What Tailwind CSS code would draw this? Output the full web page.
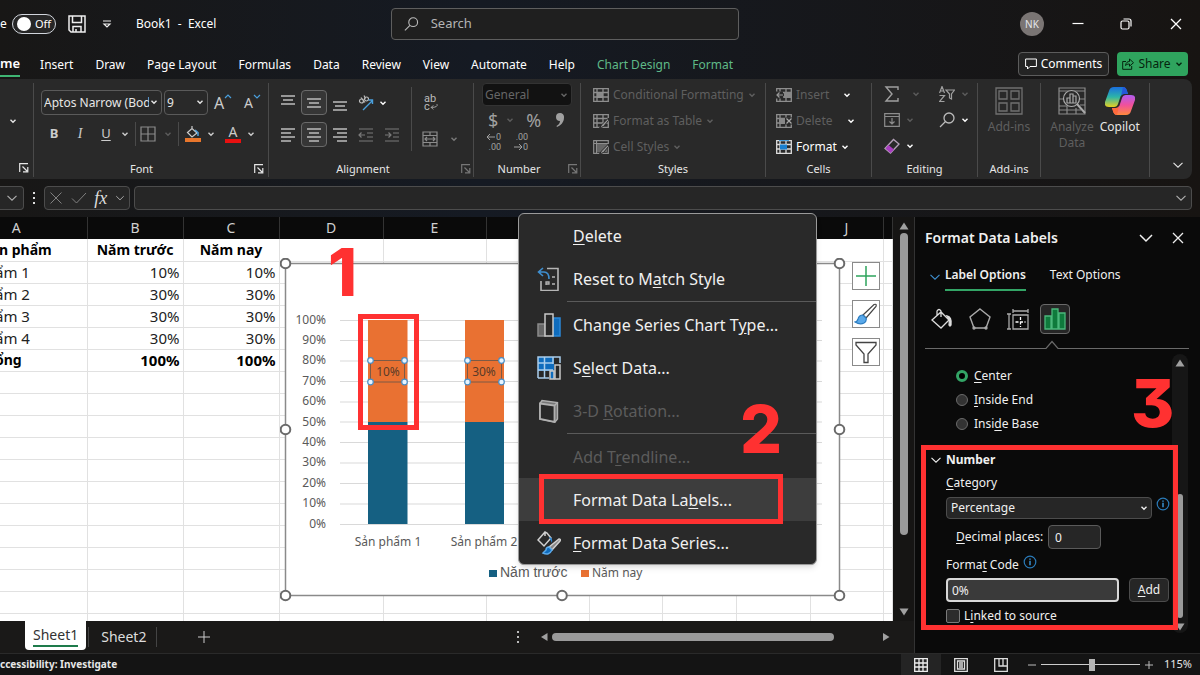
<!DOCTYPE html>
<html lang="en">
  <head>
    <meta charset="UTF-8" />
    <meta name="viewport" content="width=device-width, initial-scale=1.0" />
    <title>Book1 - Excel</title>
    <script src="https://cdn.jsdelivr.net/npm/@tailwindcss/browser@4"></script>
  </head>
  <body class="bg-[#0a0a0a] font-['Noto_Sans','Open_Sans',sans-serif] text-[13px] text-white">
    <!-- Shared icons -->
    <svg class="hidden">
      <symbol id="chev" viewBox="0 0 8 8"><path d="M1.5 2.8 4 5.2 6.5 2.8" fill="none" stroke="currentColor" stroke-width="1.4" /></symbol>
      <symbol id="chev-lg" viewBox="0 0 12 12"><path d="M1.5 3.8 6 8.2 10.5 3.8" fill="none" stroke="currentColor" stroke-width="1.1" /></symbol>
      <symbol id="launch" viewBox="0 0 10 10"><path d="M.7 9V.7H9M3.5 3.5 8 8M8.8 4v4.8H4" fill="none" stroke="currentColor" stroke-width="1.2" /></symbol>
      <symbol id="info" viewBox="0 0 14 14"><circle cx="7" cy="7" r="5.8" fill="none" stroke="#2a7ab8" stroke-width="1.2" /><path d="M7 3.5v1.3M7 5.8v4.5" stroke="#3b9be0" stroke-width="1.4" /></symbol>
      <symbol id="grid" viewBox="0 0 16 14"><path d="M.7.7h14.6v12.6H.7zM.7 4.5h14.6M.7 9h14.6M4 .7v12.6M10 .7v12.6" fill="none" stroke="currentColor" stroke-width="1.3" /></symbol>
    </svg>

    <div class="flex h-screen flex-col overflow-hidden">
      <!-- Title bar and ribbon -->
      <header class="bg-linear-to-r from-[#181716] via-[#151a23] via-40% to-[#171412]">
        <div class="flex h-12 items-center">
          <div class="flex w-[391px] shrink-0 items-center">
            <span class="w-3 text-xs">e</span>
            <button class="flex h-5 w-11 items-center gap-1 rounded-full border border-gray-300 bg-[#262626] pl-1 text-[11px]" aria-label="AutoSave">
              <span class="size-3.5 rounded-full bg-white"></span>Off
            </button>
            <button class="ml-3" aria-label="Save">
              <svg class="size-[18px]" viewBox="0 0 18 18" fill="none" stroke="#eee" stroke-width="1.5"><path d="M1 1h16v16H3l-2-2zM4.500 1v6.500h9V1M5 17v-5.500h8V17M8 14v3" /></svg>
            </button>
            <button class="ml-4" aria-label="Customize Quick Access Toolbar">
              <svg class="size-2.5" viewBox="0 0 10 10" fill="none" stroke="#eee" stroke-width="1.200"><path d="M1 2h8M2 5l3 3 3-3z" /></svg>
            </button>
            <span class="ml-6 text-xs">Book1&nbsp; -&nbsp; Excel</span>
          </div>
          <label class="flex h-8 w-[348px] items-center gap-3 rounded border border-[#5e5e5e] bg-[#1f1f1f] px-3">
            <svg class="size-4" viewBox="0 0 16 16" fill="none" stroke="#bbb" stroke-width="1.200"><circle cx="10" cy="6" r="4.800" /><path d="M6.500 9.500 1 15" /></svg>
            <input type="text" placeholder="Search" aria-label="Search" class="w-full bg-transparent text-[13px] outline-none placeholder:text-[#b4b4b4]" />
          </label>
          <div class="flex flex-1 items-center justify-end pr-4">
            <span class="mr-7 flex size-6 items-center justify-center rounded-full bg-[#7a7574] text-[10px] text-gray-200">NK</span>
            <button class="mr-9" aria-label="Minimize"><svg class="size-3" viewBox="0 0 12 12"><path d="M.5 5.500h11" stroke="#fff" stroke-width="1.200" /></svg></button>
            <button class="mr-9" aria-label="Restore"><svg class="size-3" viewBox="0 0 12 12" fill="none" stroke="#fff" stroke-width="1.200"><rect x="1" y="3" width="8" height="8" rx="1.500" /><path d="M3.500 1H9a2 2 0 0 1 2 2v5.500" /></svg></button>
            <button aria-label="Close"><svg class="size-4" viewBox="0 0 16 16"><path d="m3 3 10 10M13 3 3 13" stroke="#fff" stroke-width="1.300" /></svg></button>
          </div>
        </div>

        <nav class="flex h-[31px] items-center justify-between pr-3 text-xs">
          <div class="flex items-center gap-[22px] pt-0.5">
            <a href="#" class="-mr-0.5 flex h-6 items-center border-b-2 border-[#3fb573] text-[13px] font-semibold">me</a>
            <a href="#">Insert</a>
            <a href="#">Draw</a>
            <a href="#">Page Layout</a>
            <a href="#">Formulas</a>
            <a href="#">Data</a>
            <a href="#">Review</a>
            <a href="#">View</a>
            <a href="#">Automate</a>
            <a href="#">Help</a>
            <a href="#" class="text-[#5fba88]">Chart Design</a>
            <a href="#" class="text-[#5fba88]">Format</a>
          </div>
          <div class="flex gap-2">
            <button class="flex h-6 w-[91px] items-center justify-center gap-1 rounded border border-[#5c5c5c] bg-[#242424]">
              <svg class="size-3 shrink-0" viewBox="0 0 12 12" fill="none" stroke="#fff"><path d="M.6 1h10.800v7.500H5L2.500 11V8.500H.6z" /></svg>Comments
            </button>
            <button class="flex h-6 w-[71px] items-center justify-center gap-1 rounded bg-[#2fa45e] text-[#06240f]">
              <svg class="size-3 shrink-0" viewBox="0 0 12 12" fill="none" stroke="currentColor"><path d="M4 3.500H.7v7.800h9V8M3.500 7.500C4 4.500 5.500 3.500 7.500 3.500V1l4 3.700-4 3.500V6C5.500 6 4.500 6.500 3.500 7.500z" /></svg>Share<svg class="size-2"><use href="#chev" /></svg>
            </button>
          </div>
        </nav>

        <!-- Ribbon -->
        <div class="mr-2 flex h-[100px] rounded-r-lg bg-[#292929] pt-1 pb-0.5 text-[11px] text-[#e6e6e6]">
          <section class="flex w-[34px] flex-col items-end justify-between border-r border-[#4a4a4a] pt-[34px]">
            <svg class="mr-4 size-2"><use href="#chev" /></svg>
            <svg class="mr-1 mb-1 size-2.5"><use href="#launch" /></svg>
          </section>

          <section class="flex w-[235px] flex-col border-r border-[#4a4a4a] pt-[7px] pl-[7px]">
            <div class="flex items-center gap-0.5">
              <div class="relative">
                <select aria-label="Font" class="h-[25px] w-[121px] appearance-none rounded border border-[#5a5a5a] bg-transparent pr-3 pl-0.5 text-xs"><option>Aptos Narrow (Body</option></select>
                <svg class="absolute top-2 right-1 size-2"><use href="#chev" /></svg>
              </div>
              <div class="relative">
                <select aria-label="Font size" class="h-[25px] w-11 appearance-none rounded border border-[#5a5a5a] bg-transparent px-0.5 text-xs"><option>9</option></select>
                <svg class="absolute top-2 right-1 size-2"><use href="#chev" /></svg>
              </div>
              <button class="ml-1 flex w-6 items-start text-base leading-5 text-[#ccc]" aria-label="Increase font size">A<svg class="size-2 shrink-0" viewBox="0 0 8 8"><path d="m1 5 3-3 3 3" fill="none" stroke="#4a9fdc" stroke-width="1.200" /></svg></button>
              <button class="ml-1 flex w-6 items-start text-sm leading-5 text-[#ccc]" aria-label="Decrease font size">A<svg class="size-2 shrink-0" viewBox="0 0 8 8"><path d="m1 2 3 3 3-3" fill="none" stroke="#4a9fdc" stroke-width="1.200" /></svg></button>
            </div>
            <div class="mt-[7px] flex h-6 items-center text-[13px] text-[#ccc]">
              <button class="w-[26px] font-bold">B</button>
              <button class="w-[26px] font-['Liberation_Serif',serif] text-sm italic">I</button>
              <button class="w-[26px] underline underline-offset-2">U</button>
              <svg class="mx-0.5 size-2"><use href="#chev" /></svg>
              <span class="ml-1 h-6 w-px bg-[#4a4a4a]"></span>
              <svg class="mr-1.5 ml-1 size-4" viewBox="0 0 16 16" fill="none" stroke="#8c8c8c" stroke-width="1.200"><path d="M1 1h14v14H1zM8 1v14M1 8h14" /></svg>
              <svg class="mx-0.5 size-2 text-[#5c5c5c]"><use href="#chev" /></svg>
              <span class="ml-1 h-6 w-px bg-[#4a4a4a]"></span>
              <svg class="mx-1.5 size-4" viewBox="0 0 16 16" fill="none" stroke="#ccc" stroke-width="1.200"><path d="m2.500 6.500 4.500-4 5 4.500-5 4zM7 2.500V0" /><path d="m10 4 3 2.500V10" stroke="#4a9fdc" stroke-width="1.500" /><path d="M0 14h16" stroke="#e8762c" stroke-width="4" /></svg>
              <svg class="mr-1.5 size-2"><use href="#chev" /></svg>
              <button class="mx-1 h-[18px] w-4 border-b-4 border-[#e81010] text-sm leading-3.5" aria-label="Font color">A</button>
              <svg class="ml-0.5 size-2"><use href="#chev" /></svg>
            </div>
            <div class="mt-auto flex items-center"><span class="flex-1 pr-3 text-center">Font</span><svg class="mr-1 size-2.5"><use href="#launch" /></svg></div>
          </section>

          <section class="flex w-[205px] flex-col border-r border-[#4a4a4a] pl-1.5">
            <div class="flex">
              <div class="pt-[7px] text-[#bcbcbc]">
                <div class="flex h-[25px] items-center">
                  <span class="flex w-[26px] justify-center"><svg class="size-4" viewBox="0 0 16 16" stroke="currentColor" stroke-width="1.300"><path d="M1 1h14M3 5h10M1 9h14" /></svg></span>
                  <span class="flex h-[25px] w-[26px] items-center justify-center rounded border border-[#6a6a6a] bg-[#363636]"><svg class="size-4" viewBox="0 0 16 16" stroke="currentColor" stroke-width="1.300"><path d="M1 4h14M3 8h10M1 12h14" /></svg></span>
                  <span class="flex w-[26px] justify-center"><svg class="size-4" viewBox="0 0 16 16" stroke="currentColor" stroke-width="1.300"><path d="M1 7h14M3 11h10M1 15h14" /></svg></span>
                  <span class="flex w-[26px] justify-center"><svg class="size-4" viewBox="0 0 16 16" fill="none" stroke="currentColor" stroke-width="1.200"><circle cx="3.500" cy="6" r="2" /><circle cx="8.500" cy="4" r="2" /><path d="m3 2.500 4 5M6 .5l1.500 3" /><path d="m5 15 9.500-9.500M10.500 5h4v4" stroke="#4a9fdc" stroke-width="1.400" /></svg></span>
                  <svg class="size-2 text-white"><use href="#chev" /></svg>
                </div>
                <div class="mt-[7px] flex h-[25px] items-center">
                  <span class="flex w-[26px] justify-center"><svg class="size-4" viewBox="0 0 16 16" stroke="currentColor" stroke-width="1.300"><path d="M1 2h14M1 6h10M1 10h14M1 14h10" /></svg></span>
                  <span class="flex h-[25px] w-[26px] items-center justify-center rounded border border-[#6a6a6a] bg-[#363636]"><svg class="size-4" viewBox="0 0 16 16" stroke="currentColor" stroke-width="1.300"><path d="M1 2h14M3 6h10M1 10h14M3 14h10" /></svg></span>
                  <span class="flex w-[26px] justify-center"><svg class="size-4" viewBox="0 0 16 16" stroke="currentColor" stroke-width="1.300"><path d="M1 2h14M5 6h10M1 10h14M5 14h10" /></svg></span>
                  <span class="flex w-[26px] justify-center"><svg class="size-4 text-[#7a7a7a]" viewBox="0 0 16 16" fill="none" stroke="currentColor" stroke-width="1.200"><path d="M1 2h14M9 6h6M9 10h6M1 14h14M7 8H1M3.500 5.500 1 8l2.500 2.500" /></svg></span>
                  <span class="flex w-[26px] justify-center"><svg class="size-4 text-[#7a7a7a]" viewBox="0 0 16 16" fill="none" stroke="currentColor" stroke-width="1.200"><path d="M1 2h14M9 6h6M9 10h6M1 14h14M1 8h6M4.500 5.500 7 8l-2.500 2.500" /></svg></span>
                </div>
              </div>
              <div class="mt-1 ml-1.5 flex h-16 flex-col justify-between border-l border-[#4a4a4a] pt-1.5 pb-1 pl-2.5 text-[#bbb]">
                <div class="w-4 font-[Roboto,sans-serif] text-[11px] leading-3">
                  <div class="text-center">ab</div>
                  <div class="-mt-1 flex items-center pl-0.5">c<svg class="size-2.5" viewBox="0 0 10 10" fill="none" stroke="currentColor"><path d="M8.500 1.500q1.500 4-7 4M4 3 1.500 5.500 4 8" /></svg></div>
                </div>
                <div class="flex items-center gap-3 text-[#7a7a7a]">
                  <svg class="size-4" viewBox="0 0 16 16" fill="none" stroke="#8c8c8c" stroke-width="1.200"><path d="M1 1h14v14H1zM1 4.500h14M1 11.500h14M8 1v3.500M8 11.500V15M3 8h10M5 6 3 8l2 2M11 6l2 2-2 2" /></svg>
                  <svg class="size-2"><use href="#chev" /></svg>
                </div>
              </div>
            </div>
            <div class="mt-auto flex items-center"><span class="flex-1 pr-2.5 text-center">Alignment</span><svg class="mr-0.5 size-2.5 text-[#777]"><use href="#launch" /></svg></div>
          </section>

          <section class="flex w-[107px] flex-col border-r border-[#4a4a4a] pl-2">
            <div class="relative">
              <select disabled aria-label="Number format" class="h-[23px] w-[90px] appearance-none rounded border border-[#333] bg-[#121212] px-0.5 text-xs text-[#666]"><option>General</option></select>
              <svg class="absolute top-2 right-3 size-2 text-[#666]"><use href="#chev" /></svg>
            </div>
            <div class="flex h-7 items-center gap-2 pl-1.5 text-lg text-[#a0a0a0]">
              <span>$</span><svg class="size-2 text-[#5c5c5c]"><use href="#chev" /></svg><span class="ml-1">%</span>
              <svg class="ml-1.5 h-3.5 w-2.5" viewBox="0 0 10 14"><path d="M5 0a4 4 0 0 1 4 4.500C9 9 6 12.500 2 14l-.5-1c2-1 3.500-3 3.500-5A4 4 0 0 1 5 0z" fill="#a0a0a0" /></svg>
            </div>
            <div class="-mt-0.5 flex gap-3 pl-1 font-[Roboto,sans-serif] text-[9px] leading-[10px] text-[#a0a0a0]">
              <div>
                <div class="flex items-center"><svg class="h-2 w-2.5" viewBox="0 0 10 8" fill="none" stroke="currentColor"><path d="M9 4H1M4 1 1 4l3 3" /></svg>0</div>
                <div class="text-right">.00</div>
              </div>
              <div>
                <div class="text-right">.00</div>
                <div class="flex items-center"><svg class="h-2 w-2.5" viewBox="0 0 10 8" fill="none" stroke="currentColor"><path d="M1 4h8M6 1l3 3-3 3" /></svg>0</div>
              </div>
            </div>
            <div class="mt-auto flex items-center"><span class="flex-1 pr-3 text-center">Number</span><svg class="mr-0.5 size-2.5 text-[#777]"><use href="#launch" /></svg></div>
          </section>

          <section class="flex w-[185px] flex-col border-r border-[#4a4a4a] px-3">
            <div class="flex flex-col gap-2 text-xs leading-[18px] text-[#5f5f5f]">
              <div class="mt-[3px] flex items-center gap-1"><svg class="h-3.5 w-4 shrink-0 text-[#8e8e8e]" viewBox="0 0 16 14"><path d="M4 4h6v6H4z" fill="#888" /><use href="#grid" /></svg><span class="whitespace-nowrap">Conditional Formatting</span><svg class="size-2 shrink-0"><use href="#chev" /></svg></div>
              <div class="flex items-center gap-1"><svg class="h-3.5 w-4 text-[#8e8e8e]" viewBox="0 0 16 14"><use href="#grid" /><path d="m15.500 4-7 7-2 3 4-1.500 5-6z" fill="#999" stroke="#292929" /></svg>Format as Table<svg class="size-2"><use href="#chev" /></svg></div>
              <div class="flex items-center gap-1"><svg class="h-3.5 w-4 text-[#8e8e8e]" viewBox="0 0 16 14"><path d="M.7.7h14.600v12.600H.7zM3.500.7v12.600M.7 3.500h14.600" fill="none" stroke="#8e8e8e" stroke-width="1.200" /><path d="M4 4h10v8H4z" fill="#666" /><path d="m15.500 4-7 7-2 3 4-1.500 5-6z" fill="#999" stroke="#292929" /></svg>Cell Styles<svg class="size-2"><use href="#chev" /></svg></div>
            </div>
            <div class="mt-auto text-center">Styles</div>
          </section>

          <section class="flex w-[106px] flex-col border-r border-[#4a4a4a] px-2.5">
            <div class="flex flex-col gap-2 text-xs leading-[18px] text-[#5f5f5f]">
              <div class="mt-[3px] flex items-center gap-1"><svg class="h-3.5 w-4 text-[#8e8e8e]" viewBox="0 0 16 14"><use href="#grid" /><path d="M8 4h8v6H8z" fill="#888" /><path d="M0 3.500h7v7H0z" fill="#292929" /><path d="M7 7H1M3.500 4.500 1 7l2.500 2.500" fill="none" stroke="#999" stroke-width="1.200" /></svg>Insert<svg class="ml-2.5 size-2 text-white"><use href="#chev" /></svg></div>
              <div class="flex items-center gap-1"><svg class="h-3.5 w-4 text-[#8e8e8e]" viewBox="0 0 16 14"><use href="#grid" /><path d="M9 3.500h7v7H9z" fill="#292929" /><path d="M3 4h6v6H3z" fill="#888" /><path d="m10.500 4.500 5 5M15.500 4.500l-5 5" stroke="#aaa" stroke-width="1.200" /></svg>Delete<svg class="ml-2.5 size-2 text-white"><use href="#chev" /></svg></div>
              <div class="flex items-center gap-1 text-white"><svg class="h-3.5 w-4 text-[#ddd]" viewBox="0 0 16 14"><use href="#grid" /><path d="M4 4.500h7v5H4z" fill="#1a80d0" /><path d="M3 0h10" stroke="#4a9fdc" stroke-width="2" /></svg>Format<svg class="size-2"><use href="#chev" /></svg></div>
            </div>
            <div class="mt-auto text-center">Cells</div>
          </section>

          <section class="flex w-[106px] flex-col border-r border-[#4a4a4a]">
            <div class="grid grid-cols-2 gap-y-1 pl-3 text-[#5c5c5c]">
              <div class="flex h-[22px] items-center gap-3"><svg class="size-4" viewBox="0 0 16 16" fill="none" stroke="#a0a0a0" stroke-width="1.400"><path d="M14 4V1H2l6 7-6 7h12v-3" /></svg><svg class="size-2"><use href="#chev" /></svg></div>
              <div class="flex h-[22px] items-center gap-1.5 pl-2"><svg class="size-4" viewBox="0 0 16 16" fill="none" stroke="#a0a0a0" stroke-width="1.200"><path d="m.5 7 2.500-6.500L5.500 7M1.500 5h3M.5 9.500h5l-5 6h5M7 4h8.500l-3 4v5l-2-1V8z" /></svg><svg class="size-2"><use href="#chev" /></svg></div>
              <div class="flex h-[22px] items-center gap-1.5"><svg class="h-3.5 w-4" viewBox="0 0 16 14" fill="none" stroke="#8c8c8c" stroke-width="1.200"><path d="M.7.7h14.600v12.600H.7zM.7 3.500h14.600M8 5v6M5.500 8.500 8 11l2.500-2.500" /></svg><svg class="size-2"><use href="#chev" /></svg></div>
              <div class="flex h-[22px] items-center gap-1.5 pl-2"><svg class="size-4" viewBox="0 0 16 16" fill="none" stroke="#bbb" stroke-width="1.300"><circle cx="10" cy="6" r="5" /><path d="M6.500 9.500 1 15" /></svg><svg class="size-2 text-white"><use href="#chev" /></svg></div>
              <div class="flex h-[22px] items-center gap-1.5"><svg class="size-4" viewBox="0 0 16 16"><path d="M1 10.500 9.500 1.500l5.500 4.500-8.500 9z" fill="none" stroke="#b4a0b8" stroke-width="1.300" /><path d="m1.500 10.500 3-3.500 5.500 4.500-3.500 3.500z" fill="#a83cc0" /></svg><svg class="size-2 text-white"><use href="#chev" /></svg></div>
            </div>
            <div class="mt-auto text-center">Editing</div>
          </section>

          <section class="flex w-[63px] flex-col items-center border-r border-[#4a4a4a] pt-1">
            <svg class="size-7" viewBox="0 0 28 28" fill="none" stroke="#707070" stroke-width="1.300"><path d="M1 1h26v26H1zM4 4h8v8H4zM16 4h8v8h-8zM4 16h8v8H4zM16 16h8v8h-8z" /></svg>
            <span class="mt-1 text-xs text-[#5f5f5f]">Add-ins</span>
            <span class="mt-auto">Add-ins</span>
          </section>

          <section class="flex w-[109px] justify-center gap-1.5 border-r border-[#4a4a4a] pt-1 text-xs">
            <div class="flex flex-col items-center text-center text-[#5f5f5f]">
              <svg class="size-7" viewBox="0 0 28 28" fill="none" stroke="#8a8a8a" stroke-width="1.200"><path d="M1 1h26v26H1zM1 4h26M1 12h5M1 19h8M1 23h22M9 19v8M18 21v6M20 12h7M22 18h5" /><circle cx="13.500" cy="11.500" r="8" fill="#292929" stroke="#aaa" /><path d="m19 17 8 9" stroke="#aaa" stroke-width="2" /><path d="M9 11h3v5H9zM12 7h3v9h-3zM15 9h3v7h-3z" stroke="#aaa" /></svg>
              <span class="mt-1">Analyze<br />Data</span>
            </div>
            <div class="flex flex-col items-center">
              <svg class="h-7 w-[30px]" viewBox="0 0 30 28">
                <defs>
                  <linearGradient id="cpA" x1="0" y1="0" x2="0" y2="1"><stop offset="0" stop-color="#1a6fe0" /><stop offset=".5" stop-color="#2cb5a8" /><stop offset="1" stop-color="#e8d020" /></linearGradient>
                  <linearGradient id="cpB" x1="0" y1="0" x2="0" y2="1"><stop offset="0" stop-color="#b05cf0" /><stop offset=".5" stop-color="#f0509c" /><stop offset="1" stop-color="#ff8a3c" /></linearGradient>
                </defs>
                <path d="M9 0h9q3 0 4 4l1 3h-4q-3 0-4 4l-2 6q-1 3-4 3H4q-5 0-4-5L4 4Q5 0 9 0z" fill="url(#cpA)" />
                <path d="M21 28h-9q-3 0-4-4l-1-3h4q3 0 4-4l2-6q1-3 4-3h5q5 0 4 5l-4 11q-1 4-5 4z" fill="url(#cpB)" />
                <path d="M18 0q3 0 4 4l1 3h-4q-2 0-3 2z" fill="#2458d8" /><path d="M12 28q-3 0-4-4l-1-3h4q2 0 3-2z" fill="#ff6a3c" />
              </svg>
              <span class="mt-1">Copilot</span>
            </div>
          </section>
          <button class="mt-auto ml-auto pr-2 pb-1.5" aria-label="Ribbon display options"><svg class="size-3"><use href="#chev-lg" /></svg></button>
        </div>

        <!-- Formula bar -->
        <div class="flex h-[38px] items-center pr-2 text-[#b0b0b0]">
          <button class="flex h-6 w-6 items-center justify-center rounded-r border border-l-0 border-[#4c4c4c] bg-[#262626]" aria-label="Name box"><svg class="size-3"><use href="#chev-lg" /></svg></button>
          <svg class="mx-2 h-3 w-1" viewBox="0 0 4 12" fill="#ddd"><path d="M1 0h2v2H1zM1 5h2v2H1zM1 10h2v2H1z" /></svg>
          <div class="mr-1 flex h-6 w-[86px] items-center justify-between rounded border border-[#4c4c4c] bg-[#262626] px-1">
            <svg class="size-3.5" viewBox="0 0 14 14"><path d="m1.500 1.500 11 11M12.500 1.500l-11 11" stroke="#808080" /></svg>
            <svg class="size-4" viewBox="0 0 16 16"><path d="m1 8.500 4.500 4.500L15 3" fill="none" stroke="#808080" /></svg>
            <span class="font-['Liberation_Serif',serif] text-lg leading-5 text-[#ddd] italic">fx</span>
            <svg class="size-2.5"><use href="#chev-lg" /></svg>
          </div>
          <div class="flex h-6 flex-1 items-center rounded border border-[#4c4c4c] bg-[#262626] pr-1">
            <input type="text" aria-label="Formula" class="h-full flex-1 bg-transparent outline-none" />
            <svg class="size-3"><use href="#chev-lg" /></svg>
          </div>
        </div>
      </header>

      <div class="flex min-h-0 flex-1">
        <!-- Workbook -->
        <main class="relative flex min-w-0 flex-1 flex-col">
          <div class="flex min-h-0 flex-1">
            <div class="min-w-0 flex-1 overflow-hidden bg-white">
              <table class="w-full table-fixed border-collapse text-[15px] text-[#222]">
                <colgroup>
                  <col class="w-[87px]" /><col class="w-24" /><col class="w-24" /><col class="w-[104px]" /><col class="w-[103px]" /><col class="w-[103px]" /><col class="w-[73px]" /><col class="w-[74px]" /><col class="w-[74px]" /><col class="w-[73px]" /><col />
                </colgroup>
                <thead class="bg-[#0a0a0a] text-sm leading-5 text-[#d0d0d0]">
                  <tr class="h-[22px] *:border-r *:border-[#333] *:p-0 *:font-normal">
                    <th><span class="-ml-[54px]">A</span></th><th>B</th><th>C</th><th>D</th><th>E</th><th></th><th></th><th></th><th></th><th>J</th><th></th>
                  </tr>
                </thead>
                <tbody id="cells" class="leading-[21px] *:h-[22px] *:*:border-r *:*:border-b *:*:border-[#e1e1e1] *:*:px-[3px] *:*:py-0 *:*:text-right *:*:whitespace-nowrap">
                  <tr><th class="text-left! text-sm text-black"><span class="-ml-1">n phẩm</span></th><th class="text-center! text-sm text-black">Năm trước</th><th class="text-center! text-sm text-black">Năm nay</th><td></td><td></td><td></td><td></td><td></td><td></td><td></td><td></td></tr>
                  <tr><td class="text-left!"><span class="-ml-2">ẩm 1</span></td><td>10%</td><td>10%</td><td></td><td></td><td></td><td></td><td></td><td></td><td></td><td></td></tr>
                  <tr><td class="text-left!"><span class="-ml-2">ẩm 2</span></td><td>30%</td><td>30%</td><td></td><td></td><td></td><td></td><td></td><td></td><td></td><td></td></tr>
                  <tr><td class="text-left!"><span class="-ml-2">ẩm 3</span></td><td>30%</td><td>30%</td><td></td><td></td><td></td><td></td><td></td><td></td><td></td><td></td></tr>
                  <tr><td class="text-left!"><span class="-ml-2">ẩm 4</span></td><td>30%</td><td>30%</td><td></td><td></td><td></td><td></td><td></td><td></td><td></td><td></td></tr>
                  <tr class="font-bold text-black"><td class="text-left! text-sm"><span class="-ml-2">ổng</span></td><td>100%</td><td>100%</td><td></td><td></td><td></td><td></td><td></td><td></td><td></td><td></td></tr>
                </tbody>
              </table>
            </div>
            <!-- Vertical scrollbar -->
            <div class="flex w-[21px] flex-col items-center bg-[#161514] py-1">
              <svg class="size-2.5" viewBox="0 0 10 10"><path d="M5 1.500 9.500 8.500H.5z" fill="#a0a0a0" /></svg>
              <span class="mt-0.5 h-[302px] w-2 rounded-full bg-[#9a9a9a]"></span>
              <svg class="mt-auto size-2.5" viewBox="0 0 10 10"><path d="M5 8.500.5 1.500h9z" fill="#a0a0a0" /></svg>
            </div>
          </div>

          <!-- Sheet tabs -->
          <div class="flex h-8 items-center bg-[#1a1918] pr-6 text-sm">
            <button class="ml-[25px] h-[29px] self-start rounded-b bg-white px-2 text-[#333]"><span class="block border-b-2 border-[#1e7b4b] leading-5">Sheet1</span></button>
            <span class="ml-0.5 h-5 w-px bg-[#444]"></span>
            <button class="ml-3 text-[#ddd]">Sheet2</button>
            <span class="ml-2.5 h-5 w-px bg-[#444]"></span>
            <button class="ml-10" aria-label="New sheet"><svg class="size-3.5" viewBox="0 0 14 14"><path d="M7 1v12M1 7h12" stroke="#ccc" /></svg></button>
            <svg class="mr-5 ml-auto h-3 w-1" viewBox="0 0 4 12" fill="#bbb"><path d="M1 0h2v2H1zM1 5h2v2H1zM1 10h2v2H1z" /></svg>
            <svg class="size-2" viewBox="0 0 8 8"><path d="m1 4 6.500-4v8z" fill="#a0a0a0" /></svg>
            <span class="mr-12 ml-1 h-2 w-[282px] rounded-full bg-[#9a9a9a]"></span>
            <svg class="size-2" viewBox="0 0 8 8"><path d="M7.500 4 1 0v8z" fill="#a0a0a0" /></svg>
          </div>

          <!-- Chart object -->
          <svg class="absolute top-[41px] left-[280px] h-[344px] w-[566px] font-['Noto_Sans',sans-serif] text-xs" viewBox="280 258 566 344">
            <rect x="285.500" y="263.500" width="554" height="332" fill="#fff" stroke="#8a8a8a" stroke-width="1.500" />
            <path d="M340 320.500h482M340 340.500h482M340 361h482M340 381.500h482M340 402h482M340 422h482M340 442.500h482M340 463h482M340 483.500h482M340 504h482M340 524.500h482" stroke="#d9d9d9" />
            <path d="M368 422h39.500v102H368zM465 422h39v102h-39z" fill="#156082" />
            <path d="M368 320h39.500v102H368zM465 320h39v102h-39z" fill="#e97132" />
            <g fill="#595959" text-anchor="end">
              <text x="326" y="324">100%</text><text x="326" y="344">90%</text><text x="326" y="364">80%</text><text x="326" y="385">70%</text><text x="326" y="405">60%</text><text x="326" y="426">50%</text><text x="326" y="446">40%</text><text x="326" y="466">30%</text><text x="326" y="487">20%</text><text x="326" y="507">10%</text><text x="326" y="528">0%</text>
            </g>
            <g fill="#595959" text-anchor="middle"><text x="388" y="546">Sản phẩm 1</text><text x="484" y="546">Sản phẩm 2</text></g>
            <g fill="#5a3b28" text-anchor="middle"><text x="388" y="376">10%</text><text x="484" y="376">30%</text></g>
            <path d="M370.500 360.500h34v21.500h-34zM467.500 360.500h34v21.500h-34z" fill="none" stroke="#7d5a45" />
            <g fill="#e8f4ff" stroke="#4a90c8" stroke-width="1.200">
              <circle cx="370.500" cy="360.500" r="2.800" /><circle cx="404.500" cy="360.500" r="2.800" /><circle cx="370.500" cy="382" r="2.800" /><circle cx="404.500" cy="382" r="2.800" />
              <circle cx="467.500" cy="360.500" r="2.800" /><circle cx="501.500" cy="360.500" r="2.800" /><circle cx="467.500" cy="382" r="2.800" /><circle cx="501.500" cy="382" r="2.800" />
            </g>
            <path d="M489 570h8v7h-8z" fill="#156082" /><path d="M581 570h8v7h-8z" fill="#e97132" />
            <text x="500" y="577" fill="#595959" class="font-['Liberation_Sans',sans-serif] text-sm">Năm trước</text>
            <text x="592" y="577" fill="#595959">Năm nay</text>
            <g fill="#fff" stroke="#6a6a6a" stroke-width="2">
              <circle cx="285.500" cy="263.500" r="4.800" /><circle cx="839.500" cy="263.500" r="4.800" /><circle cx="285.500" cy="429.500" r="4.800" /><circle cx="839.500" cy="429.500" r="4.800" /><circle cx="285.500" cy="595.500" r="4.800" /><circle cx="562" cy="595.500" r="4.800" /><circle cx="839.500" cy="595.500" r="4.800" />
            </g>
          </svg>
          <div class="absolute top-[45px] left-[852px] flex flex-col gap-2.5 *:flex *:size-7 *:items-center *:justify-center *:border *:border-[#8a8a8a] *:bg-white">
            <button aria-label="Chart elements"><svg class="size-6" viewBox="0 0 24 24"><path d="M12 2v20M2 12h20" stroke="#2ea45c" stroke-width="1.500" /></svg></button>
            <button aria-label="Chart styles"><svg class="size-6" viewBox="0 0 24 24" stroke="#444" stroke-width="1.200"><path d="M9 13 20 2.500q3-1 2 2L12 16z" fill="#fff" /><path d="M9 13q-4 0-5 4-1 3-3 3 5 3 9 1 3-2 2-5z" fill="#5aa9ea" stroke="#2b7cc0" /></svg></button>
            <button aria-label="Chart filters"><svg class="size-6" viewBox="0 0 24 24" fill="none" stroke="#444" stroke-width="1.300"><path d="M2 2.500h20v2.500l-8 9v8.500h-4V14L2 5z" /></svg></button>
          </div>

          <!-- Context menu -->
          <div class="absolute -top-1 left-[518px] w-[299px] rounded-md border border-[#9a9a9a] bg-[#292929] text-base text-[#f0f0f0] shadow-md *:[button]:flex *:[button]:h-[43px] *:[button]:w-full *:[button]:items-center *:[button]:gap-3 *:[button]:pl-[18px]">
            <button><span class="w-6"></span><span><u class="underline-offset-2">D</u>elete</span></button>
            <button>
              <svg class="size-6" viewBox="0 0 24 24" fill="none" stroke="#b5b5b5" stroke-width="1.600"><path d="M10 1.500h11v22H4V14" /><path d="M9 18v-3h3v2H9M15 10h3M15 17h3" stroke-width="1.300" /><path d="M6 1 1.500 5 6 9M2 5h5q5 0 5 7" stroke="#3f8fcf" /></svg>
              <span>Reset to M<u class="underline-offset-2">a</u>tch Style</span>
            </button>
            <hr class="my-px ml-12 border-[#5a5a5a]" />
            <button>
              <svg class="size-6" viewBox="0 0 24 24" stroke-width="1.500"><path d="M1 11h7v12H1z" fill="#666" stroke="#8a8a8a" /><path d="M16 5h7v18h-7z" fill="#0f6cbd" stroke="#2a86d6" /><path d="M8 1h8v22H8z" fill="#292929" stroke="#c8c8c8" /></svg>
              <span>Change Series Chart T<u class="underline-offset-2">y</u>pe...</span>
            </button>
            <button>
              <svg class="size-6" viewBox="0 0 24 24" fill="none" stroke-width="1.500"><path d="M1 1h16v14H1z" fill="#0f6cbd" /><path d="M1 22V1h22v6M1 7h15M1 14h15M7.500 1v21M16 1v7M1 22h11" stroke="#a9cdec" /><path d="M13 15h4v8h-4z" fill="#0f6cbd" stroke="#c8c8c8" /><path d="M18 9h5v14h-5z" fill="#292929" stroke="#c8c8c8" /></svg>
              <span>S<u class="underline-offset-2">e</u>lect Data...</span>
            </button>
            <button disabled class="text-[#5c5c5c]">
              <svg class="size-6" viewBox="0 0 24 24" fill="none" stroke="#b0b0b0" stroke-width="1.400"><path d="M3 4.500 5 1.500l15.500 2V20L18 23 3 20z" fill="#777" /><path d="M3 4.500 17.500 6.500V23L3 20z" fill="#292929" stroke-width="1.800" /><path d="m17.500 6.500 3-3" /></svg>
              <span>3-D <u class="underline-offset-2">R</u>otation...</span>
            </button>
            <hr class="my-px ml-12 border-[#5a5a5a]" />
            <button disabled class="text-[#5c5c5c]"><span class="w-6"></span><span>Add T<u class="underline-offset-2">r</u>endline...</span></button>
            <button class="bg-[#3d3d3d]"><span class="w-6"></span><span>Format Data La<u class="underline-offset-2">b</u>els...</span></button>
            <button>
              <svg class="size-6" viewBox="0 0 24 24" fill="none" stroke-width="1.500"><path d="M8 1 1 9l6 6 7-8-4-5zM8 1v4" stroke="#d0d0d0" /><path d="M12 6q4 0 3 6z" fill="#2a86d6" /><path d="M12 16 22 8q2 0 1 2l-8 9z" fill="#888" stroke="#d0d0d0" /><path d="M12 16q-3 0-3 3l-3 3q6 3 9-3z" fill="#0f6cbd" stroke="#5aa9ea" /></svg>
              <span><u class="underline-offset-2">F</u>ormat Data Series...</span>
            </button>
          </div>

          <!-- Step markers 1 and 2 -->
          <div class="pointer-events-none absolute top-[97px] left-[358px] h-[116px] w-[61px] border-[5px] border-[#ff3131]"></div>
          <div class="pointer-events-none absolute top-[257px] left-[539px] h-[50px] w-[244px] border-[5px] border-[#ff3131]"></div>
          <span class="absolute top-[22px] left-[328px] font-[Inter,sans-serif] text-[66px] leading-[66px] font-extrabold text-[#ff3131]">1</span>
          <span class="absolute top-[179px] left-[740px] font-[Inter,sans-serif] text-[66px] leading-[66px] font-extrabold text-[#ff3131]">2</span>
        </main>

        <!-- Format Data Labels pane -->
        <aside class="relative flex w-[286px] shrink-0 flex-col border-l border-[#333] bg-[#0a0a0a] text-xs text-[#f0f0f0]">
          <div class="flex h-[42px] items-center pr-3.5 pl-2.5">
            <h2 class="text-sm font-semibold">Format Data Labels</h2>
            <button class="ml-auto" aria-label="Pane options"><svg class="size-4"><use href="#chev-lg" /></svg></button>
            <button class="ml-4" aria-label="Close pane"><svg class="size-4" viewBox="0 0 16 16"><path d="m3 3 10 10M13 3 3 13" stroke="#eee" stroke-width="1.300" /></svg></button>
          </div>
          <div class="flex h-8 items-end pl-3.5">
            <svg class="mr-1 mb-2 size-3 text-[#3f8fcf]"><use href="#chev-lg" /></svg>
            <button class="h-[30px] border-b-2 border-[#33a566] font-semibold">Label Options</button>
            <button class="ml-6 h-[30px] border-b-2 border-transparent">Text Options</button>
          </div>
          <div class="mt-[13px] flex h-[30px] items-center pl-[15px]">
            <svg class="size-6" viewBox="0 0 24 24" fill="none" stroke="#ddd" stroke-width="1.300"><path d="m2 13 9-8 8 8-8 8zM7 9V4q2-3 4 0v6" /><path d="M17 9q5 1 4 9-1 2-2 0 1-5-2-9z" fill="#ddd" /></svg>
            <svg class="ml-3.5 size-6" viewBox="0 0 24 24" fill="none" stroke="#aaa" stroke-width="1.400"><path d="m12 2 10 8-4 11H6L2 10z" /><circle cx="6" cy="21" r="1" /><circle cx="18" cy="21" r="1" /></svg>
            <svg class="ml-3.5 size-6" viewBox="0 0 24 24" fill="none" stroke="#aaa" stroke-width="1.300"><path d="M7 2v4M22 2v4M7 4h15M1 7h4M1 22h4M3 7v15M7 8h15v14H7z" /><path d="M14.500 10v10M9.500 15h10" stroke="#fff" stroke-dasharray="3 1.500" /></svg>
            <button class="ml-2.5 flex size-[30px] items-center justify-center rounded border border-[#6a6a6a] bg-[#262626]" aria-label="Label options"><svg class="size-[22px]" viewBox="0 0 22 22" fill="#0f7a3c" stroke="#4cb87c" stroke-width="1.300"><path d="M1 8h6v13H1zM15 5h6v16h-6zM8 1h6v20H8z" /></svg></button>
          </div>
          <svg class="mt-1 ml-2.5 h-3 w-[264px]" viewBox="0 0 264 12"><path d="M0 10.500h121l6-7 6 7h131" fill="none" stroke="#6a6a6a" stroke-width="1.200" /></svg>

          <div class="flex min-h-0 flex-1">
            <form class="min-w-0 flex-1 pt-4 pl-[31px]">
              <div class="flex flex-col gap-1 pl-2.5 *:flex *:h-5 *:items-center *:gap-1.5">
                <label><input type="radio" name="pos" checked class="size-3 appearance-none rounded-full border border-[#6a6a6a] bg-[#333] checked:border-[3px] checked:border-[#33a566] checked:bg-black" /><span><u class="underline-offset-2">C</u>enter</span></label>
                <label><input type="radio" name="pos" class="size-3 appearance-none rounded-full border border-[#6a6a6a] bg-[#333]" /><span><u class="underline-offset-2">I</u>nside End</span></label>
                <label><input type="radio" name="pos" class="size-3 appearance-none rounded-full border border-[#6a6a6a] bg-[#333]" /><span>Insi<u class="underline-offset-2">d</u>e Base</span></label>
              </div>
              <h3 class="mt-4 -ml-4 flex items-center gap-1 leading-5 font-bold"><svg class="size-3"><use href="#chev-lg" /></svg>Number</h3>
              <label for="category" class="mt-[5px] block leading-4"><u class="underline-offset-2">C</u>ategory</label>
              <div class="mt-1.5 flex">
                <div class="relative">
                  <select id="category" class="h-[22px] w-[206px] appearance-none rounded-sm border border-[#4c4c4c] bg-[#262626] px-1"><option>Percentage</option></select>
                  <svg class="absolute top-[7px] right-1 size-2"><use href="#chev" /></svg>
                </div>
                <svg class="ml-1 size-3.5 shrink-0"><use href="#info" /></svg>
              </div>
              <div class="mt-1.5 flex items-center pl-2.5">
                <label for="decimals" class="w-[92px]"><u class="underline-offset-2">D</u>ecimal places:</label>
                <input id="decimals" type="text" value="0" class="h-6 w-[53px] rounded border border-[#5a5a5a] bg-[#262626] px-1.5" />
              </div>
              <div class="mt-1.5 flex gap-1"><label for="code" class="leading-5">Forma<u class="underline-offset-2">t</u> Code</label><svg class="size-3.5"><use href="#info" /></svg></div>
              <div class="mt-[3px] flex gap-2.5">
                <input id="code" type="text" value="0%" class="h-6 w-[173px] rounded border-2 border-[#d8d8d8] bg-[#3a3a3a] px-1 outline-none" />
                <button type="button" class="h-6 w-10 rounded border border-[#4c4c4c] bg-[#262626]"><u class="underline-offset-2">A</u>dd</button>
              </div>
              <label class="mt-1 flex h-5 items-center gap-1"><input type="checkbox" class="size-3.5 appearance-none rounded-xs border border-[#7a7a7a] bg-[#2c2c2c]" /><span>L<u class="underline-offset-2">i</u>nked to source</span></label>
            </form>
            <div class="mt-1 mr-3 mb-5 flex w-4 shrink-0 flex-col items-center justify-between rounded-full bg-[#161616] pt-1 pb-px">
              <svg class="size-2.5" viewBox="0 0 10 10"><path d="M5 1.500 9.500 8.500H.5z" fill="#a0a0a0" /></svg>
              <span class="mt-auto mb-1 h-[124px] w-1.5 rounded-full bg-[#9a9a9a]"></span>
              <svg class="size-2.5" viewBox="0 0 10 10"><path d="M5 8.500.5 1.500h9z" fill="#a0a0a0" /></svg>
            </div>
          </div>

          <!-- Step marker 3 -->
          <div class="pointer-events-none absolute top-[228px] left-1.5 h-[185px] w-[257px] border-[5px] border-[#ff3131]"></div>
          <span class="absolute top-[153px] left-[216px] font-[Inter,sans-serif] text-[66px] leading-[66px] font-extrabold text-[#ff3131] [font-feature-settings:'cv09']">3</span>
        </aside>
      </div>

      <!-- Status bar -->
      <footer class="flex h-[22px] items-center border-t border-[#2a2a2a] bg-[#141414] pr-2 text-[11px] text-[#e6e6e6]">
        <span class="text-[10px] font-bold">ccessibility: Investigate</span>
        <button class="ml-auto flex h-full w-10 items-center justify-center bg-[#242424]" aria-label="Normal view"><svg class="size-3.5" viewBox="0 0 14 14" fill="none" stroke="#eee" stroke-width="1.300"><path d="M.7.7h12.600v12.600H.7zM.7 5h12.600M.7 9h12.600M5 .7v12.600M9 .7v12.600" /></svg></button>
        <button class="flex w-10 justify-center" aria-label="Page layout view"><svg class="size-3.5" viewBox="0 0 14 14" fill="none" stroke="#ddd" stroke-width="1.300"><path d="M.7.7h12.600v12.600H.7zM3.500 3h7v8h-7zM5 5h4M5 7h4M5 9h4" /></svg></button>
        <button class="flex w-10 justify-center" aria-label="Page break preview"><svg class="size-3.5" viewBox="0 0 14 14" fill="none" stroke="#ddd" stroke-width="1.300"><path d="M.7.7h12.600v12.600H.7zM5 .7V8h4V.7M9 8h4" /></svg></button>
        <button class="ml-1.5 w-3.5" aria-label="Zoom out"><svg class="size-2.5" viewBox="0 0 10 10"><path d="M1 5h8" stroke="#bbb" /></svg></button>
        <input type="range" min="10" max="200" value="109" aria-label="Zoom" class="h-px w-[99px] appearance-none bg-[#ccc] [&::-webkit-slider-thumb]:h-3 [&::-webkit-slider-thumb]:w-1.5 [&::-webkit-slider-thumb]:appearance-none [&::-webkit-slider-thumb]:bg-[#b4b4b4]" />
        <button class="ml-1 w-5" aria-label="Zoom in"><svg class="size-2.5" viewBox="0 0 10 10"><path d="M1 5h8M5 1v8" stroke="#bbb" /></svg></button>
        <span>115%</span>
      </footer>
    </div>

    <script>
      // Fill the sheet with empty rows below the data
      const cells = document.getElementById("cells");
      for (let i = 0; i < 12; i++) {
        const row = cells.insertRow();
        for (let j = 0; j < 11; j++) row.insertCell();
      }
    </script>
  </body>
</html>
